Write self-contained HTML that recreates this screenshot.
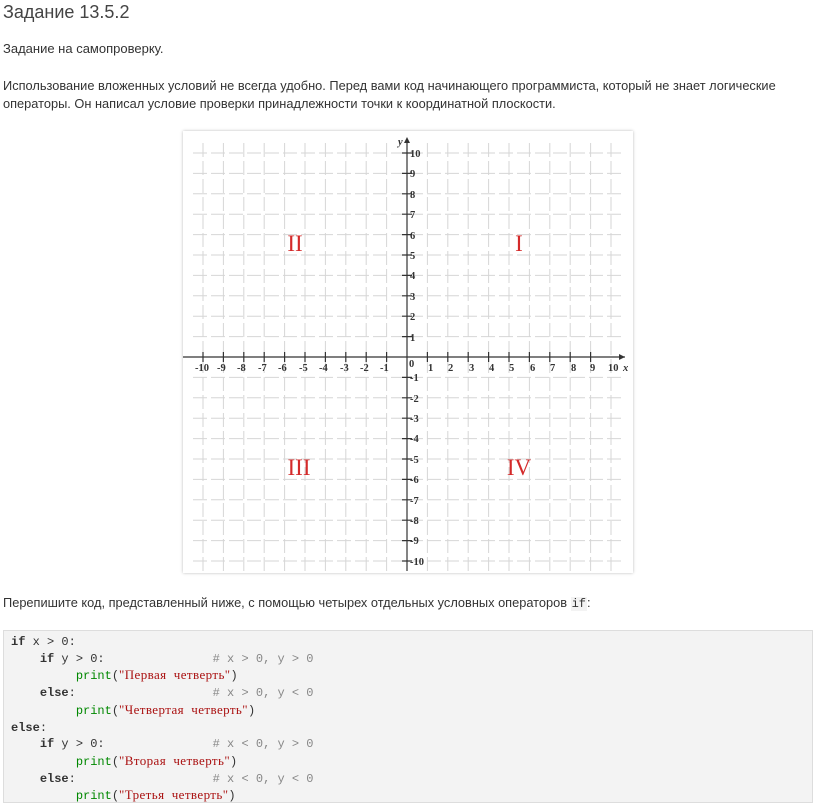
<!DOCTYPE html>
<html><head><meta charset="utf-8"><style>
body{margin:0;background:#fff;width:824px;height:812px;position:relative;font-family:"Liberation Sans","DejaVu Sans",sans-serif;color:#333;overflow:hidden}
.t{position:absolute;left:3px;white-space:nowrap}
h1{position:absolute;left:3px;top:2px;margin:0;font-weight:normal;font-size:18px;color:#444}
p{margin:0}
.code{position:absolute;left:3px;top:630px;width:810px;height:173px;background:#f3f3f3;border:1px solid #ddd;box-sizing:border-box;}
pre{margin:0;position:absolute;left:7px;top:3px;font-family:"Liberation Mono",monospace;font-size:12px;line-height:16.7px;color:#333}
b{color:#333}
.g{color:#080}.s{color:#a11;font-family:"Liberation Serif",serif;font-size:13px;letter-spacing:0.4px}.c{color:#888}
code{font-family:"Liberation Mono",monospace;background:#f3f3f3;font-size:12px;padding:0 1px}
</style></head><body>
<h1>Задание 13.5.2</h1>
<p class="t" style="top:41px;font-size:13px">Задание на самопроверку.</p>
<p class="t" style="top:77px;font-size:12.8px;line-height:18px">Использование вложенных условий не всегда удобно. Перед вами код начинающего программиста, который не знает логические<br>операторы. Он написал условие проверки принадлежности точки к координатной плоскости.</p>
<svg style="position:absolute;left:183px;top:131px;box-shadow:0 0 3px #bbb" width="450" height="442" viewBox="0 0 450 442">
<rect width="450" height="442" fill="#fff"/>
<g stroke="#d6d6d6" stroke-width="1" stroke-dasharray="14 4" fill="none">
<path d="M20 12V440M40.4 12V440M60.8 12V440M81.2 12V440M101.6 12V440M122 12V440M142.4 12V440M162.8 12V440M183.2 12V440M203.6 12V440M244.4 12V440M264.8 12V440M285.2 12V440M305.6 12V440M326 12V440M346.4 12V440M366.8 12V440M387.2 12V440M407.6 12V440M428 12V440"/>
<path d="M10 22H440M10 42.4H440M10 62.8H440M10 83.2H440M10 103.6H440M10 124H440M10 144.4H440M10 164.8H440M10 185.2H440M10 205.6H440M10 246.4H440M10 266.8H440M10 287.2H440M10 307.6H440M10 328H440M10 348.4H440M10 368.8H440M10 389.2H440M10 409.6H440M10 430H440"/>
</g>
<g stroke="#333" stroke-width="1.2" fill="none">
<path d="M0 226H442M224 440V8"/>
<path d="M20 221V231M40.4 221V231M60.8 221V231M81.2 221V231M101.6 221V231M122 221V231M142.4 221V231M162.8 221V231M183.2 221V231M203.6 221V231M244.4 221V231M264.8 221V231M285.2 221V231M305.6 221V231M326 221V231M346.4 221V231M366.8 221V231M387.2 221V231M407.6 221V231"/>
<path d="M219 22H229M219 42.4H229M219 62.8H229M219 83.2H229M219 103.6H229M219 124H229M219 144.4H229M219 164.8H229M219 185.2H229M219 205.6H229M219 246.4H229M219 266.8H229M219 287.2H229M219 307.6H229M219 328H229M219 348.4H229M219 368.8H229M219 389.2H229M219 409.6H229M219 430H229"/>
</g>
<path d="M442 226l-6-3v6zM224 6l-3 6h6z" fill="#333"/>
<g font-family="Liberation Serif,serif" font-size="10.5" fill="#333" font-weight="bold">
<text x="12" y="240">-10</text><text x="34" y="240">-9</text><text x="54" y="240">-8</text><text x="75" y="240">-7</text><text x="95" y="240">-6</text><text x="116" y="240">-5</text><text x="136" y="240">-4</text><text x="157" y="240">-3</text><text x="177" y="240">-2</text><text x="197" y="240">-1</text><text x="226" y="236">0</text>
<text x="245" y="240">1</text><text x="265" y="240">2</text><text x="286" y="240">3</text><text x="306" y="240">4</text><text x="326" y="240">5</text><text x="347" y="240">6</text><text x="367" y="240">7</text><text x="388" y="240">8</text><text x="407" y="240">9</text><text x="425" y="240">10</text>
<text x="440" y="240" font-style="italic">x</text><text x="215" y="14" font-style="italic">y</text>
<text x="227" y="26">10</text><text x="227" y="46">9</text><text x="227" y="67">8</text><text x="227" y="87">7</text><text x="227" y="108">6</text><text x="227" y="128">5</text><text x="227" y="148">4</text><text x="227" y="169">3</text><text x="227" y="189">2</text><text x="227" y="210">1</text>
<text x="227" y="250">-1</text><text x="227" y="271">-2</text><text x="227" y="291">-3</text><text x="227" y="311">-4</text><text x="227" y="332">-5</text><text x="227" y="352">-6</text><text x="227" y="373">-7</text><text x="227" y="393">-8</text><text x="227" y="413">-9</text><text x="227" y="434">-10</text>
</g>
<g font-family="Liberation Serif,serif" font-size="23" fill="#d42a2a" text-anchor="middle">
<text x="112" y="120">II</text><text x="336" y="120">I</text><text x="116" y="344">III</text><text x="336" y="344">IV</text>
</g>
</svg>
<p class="t" style="top:595px;font-size:12.8px">Перепишите код, представленный ниже, с помощью четырех отдельных условных операторов <code>if</code>:</p>
<div class="code"><pre><b>if</b> x &gt; 0:
    <b>if</b> y &gt; 0:               <span class="c"># x &gt; 0, y &gt; 0</span>
         <span class="g">print</span>(<span class="s">"Первая  четверть"</span>)
    <b>else</b>:                   <span class="c"># x &gt; 0, y &lt; 0</span>
         <span class="g">print</span>(<span class="s">"Четвертая  четверть"</span>)
<b>else</b>:
    <b>if</b> y &gt; 0:               <span class="c"># x &lt; 0, y &gt; 0</span>
         <span class="g">print</span>(<span class="s">"Вторая  четверть"</span>)
    <b>else</b>:                   <span class="c"># x &lt; 0, y &lt; 0</span>
         <span class="g">print</span>(<span class="s">"Третья  четверть"</span>)</pre></div>
</body></html>
